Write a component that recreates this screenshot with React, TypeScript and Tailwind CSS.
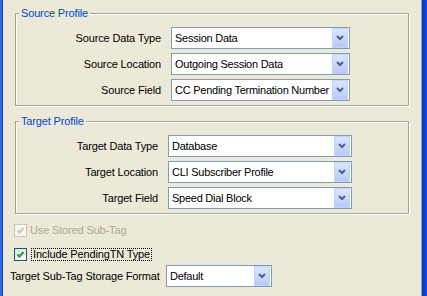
import React from "react";

const FONT = { fontFamily: "'Liberation Sans', Arial, sans-serif" };

function Chevron() {
  return (
    <svg width="8" height="6" viewBox="0 0 8 6" className="block">
      <polyline points="1,1 4,4 7,1" fill="none" stroke="#4d6185" strokeWidth="2" />
    </svg>
  );
}

function Combo({ value, width }: { value: string; width: string }) {
  return (
    <div className={`flex h-[22px] ${width} items-center border border-[#7f9db9] bg-white`}>
      <span className="flex-1 overflow-hidden whitespace-nowrap pl-[3px] text-[11px] leading-[13px] tracking-[-0.25px] text-black">
        {value}
      </span>
      <div className="mr-[1px] flex h-[20px] w-[16px] shrink-0 items-center justify-center border border-[#c3d3fd] bg-gradient-to-b from-[#dbe6ff] to-[#b7c9f6]">
        <Chevron />
      </div>
    </div>
  );
}

function Check({ disabled }: { disabled?: boolean }) {
  const color = disabled ? "#cac8bb" : "#21a121";
  return (
    <div
      className={`flex h-[13px] w-[13px] items-center justify-center border ${
        disabled ? "border-[#cac8bb] bg-[#f7f6ef]" : "border-[#1c5180] bg-gradient-to-br from-[#dcdcd7] to-white"
      }`}
    >
      <svg width="9" height="9" viewBox="0 0 9 9" className="block">
        <path d="M1.5 4.5 L3.5 6.5 L7.5 2" fill="none" stroke={color} strokeWidth="2.2" />
      </svg>
    </div>
  );
}

function Group({
  title,
  rows,
  labelW,
  comboW,
  className,
}: {
  title: string;
  rows: [string, string][];
  labelW: string;
  comboW: string;
  className: string;
}) {
  return (
    <fieldset
      className={`ml-[12px] w-[394px] border border-[#a5a597] shadow-[1px_1px_0_#fff,inset_1px_1px_0_#fff] ${className}`}
    >
      <legend className="ml-[3px] bg-[#ece9d8] px-[2px] text-[11px] leading-[13px] tracking-[-0.15px] text-[#0046d5]">
        {title}
      </legend>
      <div className="flex flex-col gap-[4px] pt-[7px] pb-[4px]">
        {rows.map(([label, value]) => (
          <div key={label} className="flex items-center">
            <span
              className={`${labelW} shrink-0 whitespace-nowrap text-right text-[11px] leading-[13px] tracking-[-0.15px] text-black`}
            >
              {label}
            </span>
            <div className="ml-[10px]">
              <Combo value={value} width={comboW} />
            </div>
          </div>
        ))}
      </div>
    </fieldset>
  );
}

export default function App() {
  return (
    <div className="flex h-[296px] w-[427px] overflow-hidden bg-[#ece9d8]" style={FONT}>
      <div className="w-[3px] bg-gradient-to-r from-[#3b77f0] to-[#0a3ed8]" />
      <div className="flex flex-1 flex-col">
        <Group
          title="Source Profile"
          className="mt-[7px]"
          labelW="w-[145px]"
          comboW="w-[179px]"
          rows={[
            ["Source Data Type", "Session Data"],
            ["Source Location", "Outgoing Session Data"],
            ["Source Field", "CC Pending Termination Number"],
          ]}
        />
        <Group
          title="Target Profile"
          className="mt-[9px]"
          labelW="w-[142px]"
          comboW="w-[184px]"
          rows={[
            ["Target Data Type", "Database"],
            ["Target Location", "CLI Subscriber Profile"],
            ["Target Field", "Speed Dial Block"],
          ]}
        />
        <div className="ml-[11px] mt-[10px] flex h-[13px] items-center">
          <Check disabled />
          <span className="ml-[3px] text-[11px] leading-[13px] tracking-[-0.15px] text-[#aca899]">
            Use Stored Sub-Tag
          </span>
        </div>
        <div className="ml-[11px] mt-[11px] flex h-[13px] items-center">
          <Check />
          <span className="ml-[4px] border border-dotted border-black px-[1px] text-[11px] leading-[11px] tracking-[-0.15px] text-black">
            Include PendingTN Type
          </span>
        </div>
        <div className="ml-[7px] mt-[4px] flex items-center">
          <span className="w-[156px] shrink-0 whitespace-nowrap text-[11px] leading-[13px] tracking-[-0.15px] text-black">
            Target Sub-Tag Storage Format
          </span>
          <Combo value="Default" width="w-[106px]" />
        </div>
      </div>
      <div className="w-[1px] bg-[#a0a0a0]" />
      <div className="w-[5px] bg-gradient-to-r from-[#0a2fd0] to-[#1353e6]" />
    </div>
  );
}
